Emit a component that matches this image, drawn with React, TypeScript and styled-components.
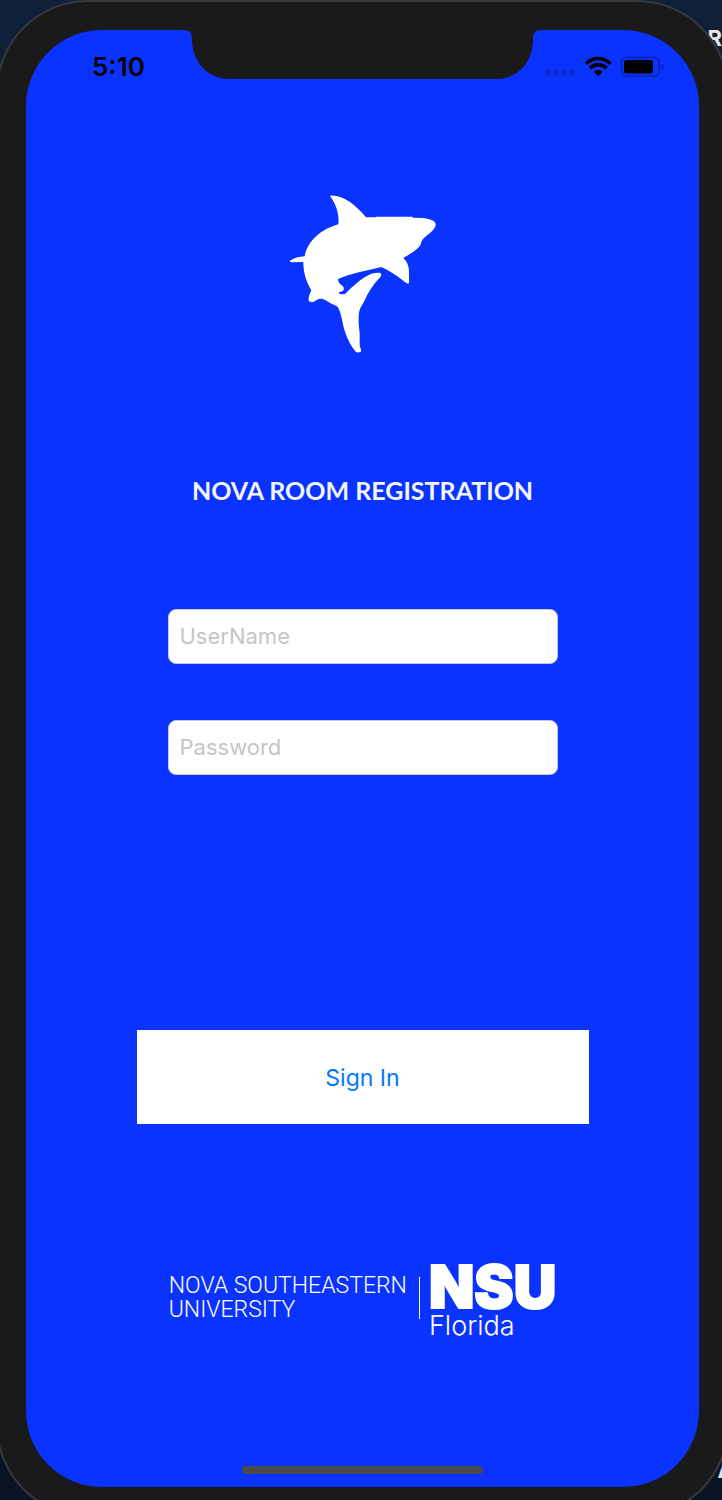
import React from 'react';
import styled, { createGlobalStyle } from 'styled-components';

const Global = createGlobalStyle`
  *, *::before, *::after { box-sizing: border-box; }
  body {
    margin: 0;
    background: #0c1a30;
    font-family: Inter, 'Liberation Sans', sans-serif;
  }
`;

const Desktop = styled.div`
  position: relative;
  height: 100vh;
  min-height: 600px;
  overflow: hidden;
  background: linear-gradient(#10203a, #0c1a30 50%, #0b1424);
`;

const DesktopLabel = styled.span<{ $edge: 'top' | 'bottom' }>`
  position: absolute;
  right: ${({ $edge }) => ($edge === 'top' ? '0' : '-12px')};
  ${({ $edge }) => ($edge === 'top' ? 'top: 24px;' : 'bottom: 16px;')}
  color: #e6e6e6;
  font: 700 22px/28px Inter, sans-serif;
`;

const Phone = styled.div`
  position: relative;
  margin: 0 -7px 0 -4px;
  padding: 28px;
  border: 2px solid #38393f;
  border-radius: 92px;
  background: #1a1a1a;
`;

const Screen = styled.div`
  position: relative;
  display: flex;
  flex-direction: column;
  align-items: center;
  padding: 22px 0 13px;
  border-radius: 76px;
  background: #0a33ff;
`;

const Notch = styled.svg`
  position: absolute;
  top: -1px;
  left: 50%;
  width: 358px;
  height: 50px;
  margin-left: -179px;
`;

const StatusBar = styled.header`
  display: flex;
  align-self: stretch;
  align-items: center;
  justify-content: space-between;
  height: 30px;
  padding: 0 35px 0 66px;
`;

const Time = styled.time`
  color: #000;
  font-size: 26px;
  font-weight: 600;
  line-height: 30px;
`;

const StatusIcons = styled.svg`
  width: 120px;
  height: 22px;
`;

const Shark = styled.svg`
  width: 147px;
  height: 158px;
  margin-top: 113px;
`;

const Title = styled.h1`
  margin: 119px 0 0;
  color: #f4f6ff;
  font: 700 25px/36px Lato, sans-serif;
`;

const Form = styled.form`
  display: flex;
  flex-direction: column;
  align-items: center;
  width: 100%;
  max-width: 452px;
  margin-top: 101px;
`;

const Fields = styled.div`
  display: flex;
  flex-direction: column;
  gap: 56px;
  width: 100%;
  max-width: 390px;
`;

const Field = styled.input`
  width: 100%;
  height: 55px;
  padding: 0 11px 2px;
  border: 1px solid #c8c8cc;
  border-radius: 8px;
  background: #fff;
  color: #111;
  font: 400 22px/28px Inter, sans-serif;

  &::placeholder {
    color: #c5c5c7;
    opacity: 1;
  }
`;

const SignIn = styled.button`
  width: 100%;
  height: 94px;
  margin-top: 255px;
  padding: 2px 0 0;
  border: 0;
  background: #fff;
  color: #007aff;
  font: 400 23px/30px Inter, sans-serif;
`;

const Brand = styled.footer`
  display: flex;
  align-items: center;
  margin-top: 138px;
  color: #fff;
`;

const University = styled.p`
  margin: 0 0 6px;
  padding-right: 12px;
  font: 300 23px/24px Roboto, sans-serif;
`;

const Rule = styled.span`
  width: 1px;
  height: 42px;
  margin: 0 9px 6px 0;
  background: #fff;
`;

const Campus = styled.div`
  display: flex;
  flex-direction: column;
`;

const Initials = styled.strong`
  font: 900 59px/50px Inter, sans-serif;
  -webkit-text-stroke: 2px #fff;
`;

const State = styled.span`
  font: 300 27px/28px Inter, sans-serif;
`;

const HomeIndicator = styled.div`
  width: 241px;
  height: 8px;
  margin-top: 126px;
  border-radius: 4px;
  background: #4b4b4b;
`;

export default function App() {
  return (
    <>
      <Global />
      <Desktop>
        <DesktopLabel $edge="top">R</DesktopLabel>
        <DesktopLabel $edge="bottom">A</DesktopLabel>
        <Phone>
          <Screen>
            <Notch viewBox="0 0 358 50" aria-hidden="true">
              <path
                d="M0 0H358V1C351 1 349 4 349 11C349 33 334 50 312 50H46C24 50 8 33 8 11C8 4 6 1 0 1Z"
                fill="#1a1a1a"
              />
            </Notch>
            <StatusBar>
              <Time>5:10</Time>
              <StatusIcons viewBox="0 0 120 22" role="img" aria-label="No signal, Wi-Fi on, battery charged">
                <g fill="#0a2acb">
                  <circle cx="4" cy="17" r="3" />
                  <circle cx="12" cy="17" r="3" />
                  <circle cx="20" cy="17" r="3" />
                  <circle cx="28" cy="17" r="3" />
                </g>
                <g fill="none" stroke="#000" strokeWidth="3.6">
                  <path d="M42 7.8C49 0.8 59.500 0.8 66.500 7.800" />
                  <path d="M46 12.200C51 7.400 57.500 7.400 62.500 12.200" />
                </g>
                <path d="M49.800 15.700C52.500 13.400 56 13.400 58.700 15.700L54.250 20.200Z" fill="#000" />
                <rect x="77.500" y="1.500" width="38" height="18.500" rx="5" fill="none" stroke="#0822a6" strokeWidth="1.500" />
                <rect x="80" y="4" width="29" height="13.500" rx="2.500" fill="#000" />
                <path d="M118 8C120 9 120 13 118 14Z" fill="#0822a6" />
              </StatusIcons>
            </StatusBar>
            <Shark viewBox="27 30 441 474" role="img" aria-label="Shark">
              <path
                d="M150 32C185 27 225 57 258 97L288 97L290 95L396 95L400 98L427 99C446 101 468 106 467 119C466 132 448 146 436 155C423 164 424 177 419 184C407 199 385 210 370 219C382 230 388 245 387 266V295C382 298 376 292 368 286C349 271 326 256 304 246C264 257 215 264 174 282C174 292 181 299 188 303C191 306 192 309 191 314C188 321 179 319 176 323C181 329 190 329 196 326C218 304 240 282 268 269C278 264 291 262 301 264C305 267 304 272 301 276C279 298 263 325 252 350C243 364 236 375 236 397C235 415 237 427 239 443V480L244 499C239 503 233 504 227 500C207 476 193 441 188 413C184 398 182 377 171 364C157 357 149 354 137 346C128 340 118 339 108 346C101 353 93 353 86 348C85 334 89 328 94 316C78 290 70 263 70 231L37 232C29 231 27 228 34 225C44 218 59 215 74 214C82 167 124 133 175 118C178 85 168 58 150 32Z"
                fill="#fff"
              />
            </Shark>
            <Title>NOVA ROOM REGISTRATION</Title>
            <Form onSubmit={(event) => event.preventDefault()}>
              <Fields>
                <Field type="text" placeholder="UserName" aria-label="UserName" autoComplete="username" />
                <Field type="password" placeholder="Password" aria-label="Password" autoComplete="current-password" />
              </Fields>
              <SignIn type="submit">Sign In</SignIn>
            </Form>
            <Brand>
              <University>
                NOVA SOUTHEASTERN
                <br />
                UNIVERSITY
              </University>
              <Rule />
              <Campus>
                <Initials>NSU</Initials>
                <State>Florida</State>
              </Campus>
            </Brand>
            <HomeIndicator />
          </Screen>
        </Phone>
      </Desktop>
    </>
  );
}
